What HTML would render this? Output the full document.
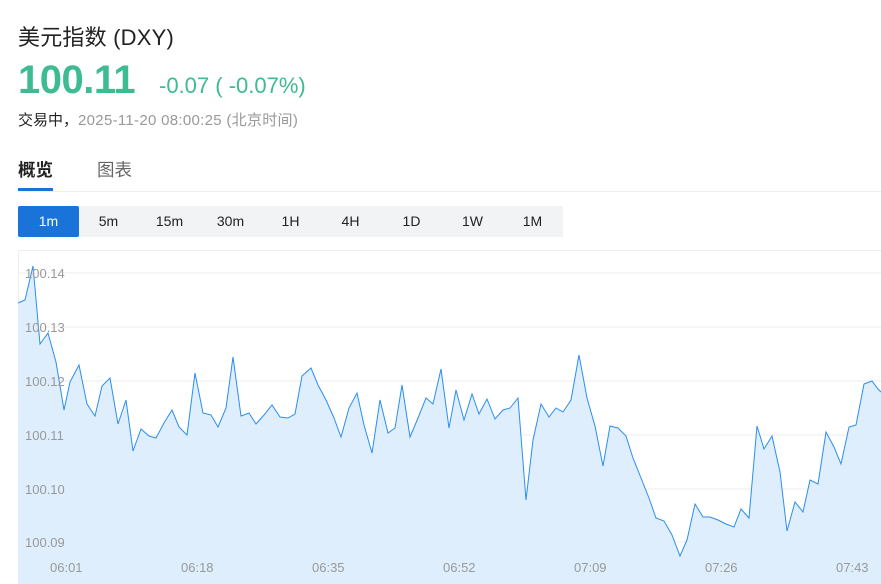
<!DOCTYPE html>
<html><head><meta charset="utf-8"><style>
body{margin:0;width:881px;height:584px;overflow:hidden;background:#fff;font-family:"Liberation Sans","Noto Sans CJK SC",sans-serif;position:relative}
.a{position:absolute;white-space:nowrap}
</style></head><body>
<div class="a" style="left:18px;top:20px;font-size:22px;color:#222;letter-spacing:0.2px">美元指数 (DXY)</div>
<div class="a" style="left:18px;top:58px;font-size:40px;font-weight:bold;color:#3dbb91;letter-spacing:-0.5px">100.11</div>
<div class="a" style="left:159px;top:73px;font-size:22px;color:#3dbb91">-0.07 ( -0.07%)</div>
<div class="a" style="left:18px;top:109px;font-size:15px;color:#222">交易中，<span style="color:#999;letter-spacing:0.3px">2025-11-20 08:00:25 (北京时间)</span></div>
<div class="a" style="left:18px;top:157px;font-size:17.5px;font-weight:bold;color:#222">概览</div>
<div class="a" style="left:97px;top:157px;font-size:17.5px;color:#666">图表</div>
<div class="a" style="left:18px;top:188px;width:35px;height:3px;background:#1a73d9"></div>
<div class="a" style="left:18px;top:191px;width:863px;height:1px;background:#eee"></div>
<div class="a" style="left:18px;top:206px;width:545px;height:31px;background:#f2f3f5"></div>
<div class="a" style="left:18px;top:206px;width:61px;height:31px;background:#1a73d9;border-radius:2px"></div>
<div style="font-size:14px;color:#222">
<div class="a" style="left:18px;top:213px;width:61px;text-align:center;color:#fff">1m</div>
<div class="a" style="left:78px;top:213px;width:61px;text-align:center">5m</div>
<div class="a" style="left:139px;top:213px;width:61px;text-align:center">15m</div>
<div class="a" style="left:200px;top:213px;width:61px;text-align:center">30m</div>
<div class="a" style="left:260px;top:213px;width:61px;text-align:center">1H</div>
<div class="a" style="left:320px;top:213px;width:61px;text-align:center">4H</div>
<div class="a" style="left:381px;top:213px;width:61px;text-align:center">1D</div>
<div class="a" style="left:442px;top:213px;width:61px;text-align:center">1W</div>
<div class="a" style="left:502px;top:213px;width:61px;text-align:center">1M</div>
</div>
<svg class="a" style="left:0;top:0" width="881" height="584">
<rect x="18.5" y="250.5" width="870" height="340" fill="none" stroke="#eee"/>
<g stroke="#ececec"><line x1="18" x2="881" y1="273" y2="273"/><line x1="18" x2="881" y1="327" y2="327"/><line x1="18" x2="881" y1="381" y2="381"/><line x1="18" x2="881" y1="435" y2="435"/><line x1="18" x2="881" y1="489" y2="489"/><line x1="18" x2="881" y1="542" y2="542"/></g>
<polygon fill="#deeefd" points="18,584 18,303 25,300 33,266 40,344 48,333 56,362 64,410 70,382 79,365 87,404 95,416 102,386 110,378 118,424 126,400 133,451 141,429 149,436 156,438 164,423 172,410 179,427 187,435 195,373 203,413 211,415 218,427 226,408 233,357 241,416 249,413 256,424 264,415 272,405 280,417 288,418 295,414 302,376 311,368 318,385 326,400 334,418 341,437 349,408 357,393 364,425 372,453 380,400 388,433 395,428 402,385 410,437 418,418 426,398 433,404 441,369 449,428 456,390 464,420 472,394 479,414 487,399 495,419 503,410 510,408 518,398 526,500 533,440 541,404 549,417 556,408 563,412 571,400 579,355 587,398 595,426 603,466 610,426 618,428 626,436 633,458 641,478 649,498 656,518 664,521 672,535 680,556 687,540 695,504 703,517 710,517 718,520 726,524 734,527 741,509 749,518 757,426 764,449 772,436 780,472 787,531 795,502 803,512 810,480 818,484 826,432 834,447 841,464 849,427 856,425 864,384 872,381 878,389 881,392 881,584"/>
<polyline fill="none" stroke="#2b8ef0" stroke-width="1" points="18,303 25,300 33,266 40,344 48,333 56,362 64,410 70,382 79,365 87,404 95,416 102,386 110,378 118,424 126,400 133,451 141,429 149,436 156,438 164,423 172,410 179,427 187,435 195,373 203,413 211,415 218,427 226,408 233,357 241,416 249,413 256,424 264,415 272,405 280,417 288,418 295,414 302,376 311,368 318,385 326,400 334,418 341,437 349,408 357,393 364,425 372,453 380,400 388,433 395,428 402,385 410,437 418,418 426,398 433,404 441,369 449,428 456,390 464,420 472,394 479,414 487,399 495,419 503,410 510,408 518,398 526,500 533,440 541,404 549,417 556,408 563,412 571,400 579,355 587,398 595,426 603,466 610,426 618,428 626,436 633,458 641,478 649,498 656,518 664,521 672,535 680,556 687,540 695,504 703,517 710,517 718,520 726,524 734,527 741,509 749,518 757,426 764,449 772,436 780,472 787,531 795,502 803,512 810,480 818,484 826,432 834,447 841,464 849,427 856,425 864,384 872,381 878,389 881,392"/>
<g font-family="Liberation Sans,sans-serif" font-size="13" fill="#999">
<text x="25" y="278">100.14</text><text x="25" y="332">100.13</text><text x="25" y="386">100.12</text><text x="25" y="440">100.11</text><text x="25" y="494">100.10</text><text x="25" y="547">100.09</text>
<text x="50" y="572">06:01</text><text x="181" y="572">06:18</text><text x="312" y="572">06:35</text><text x="443" y="572">06:52</text><text x="574" y="572">07:09</text><text x="705" y="572">07:26</text><text x="836" y="572">07:43</text>
</g>
</svg>
</body></html>
